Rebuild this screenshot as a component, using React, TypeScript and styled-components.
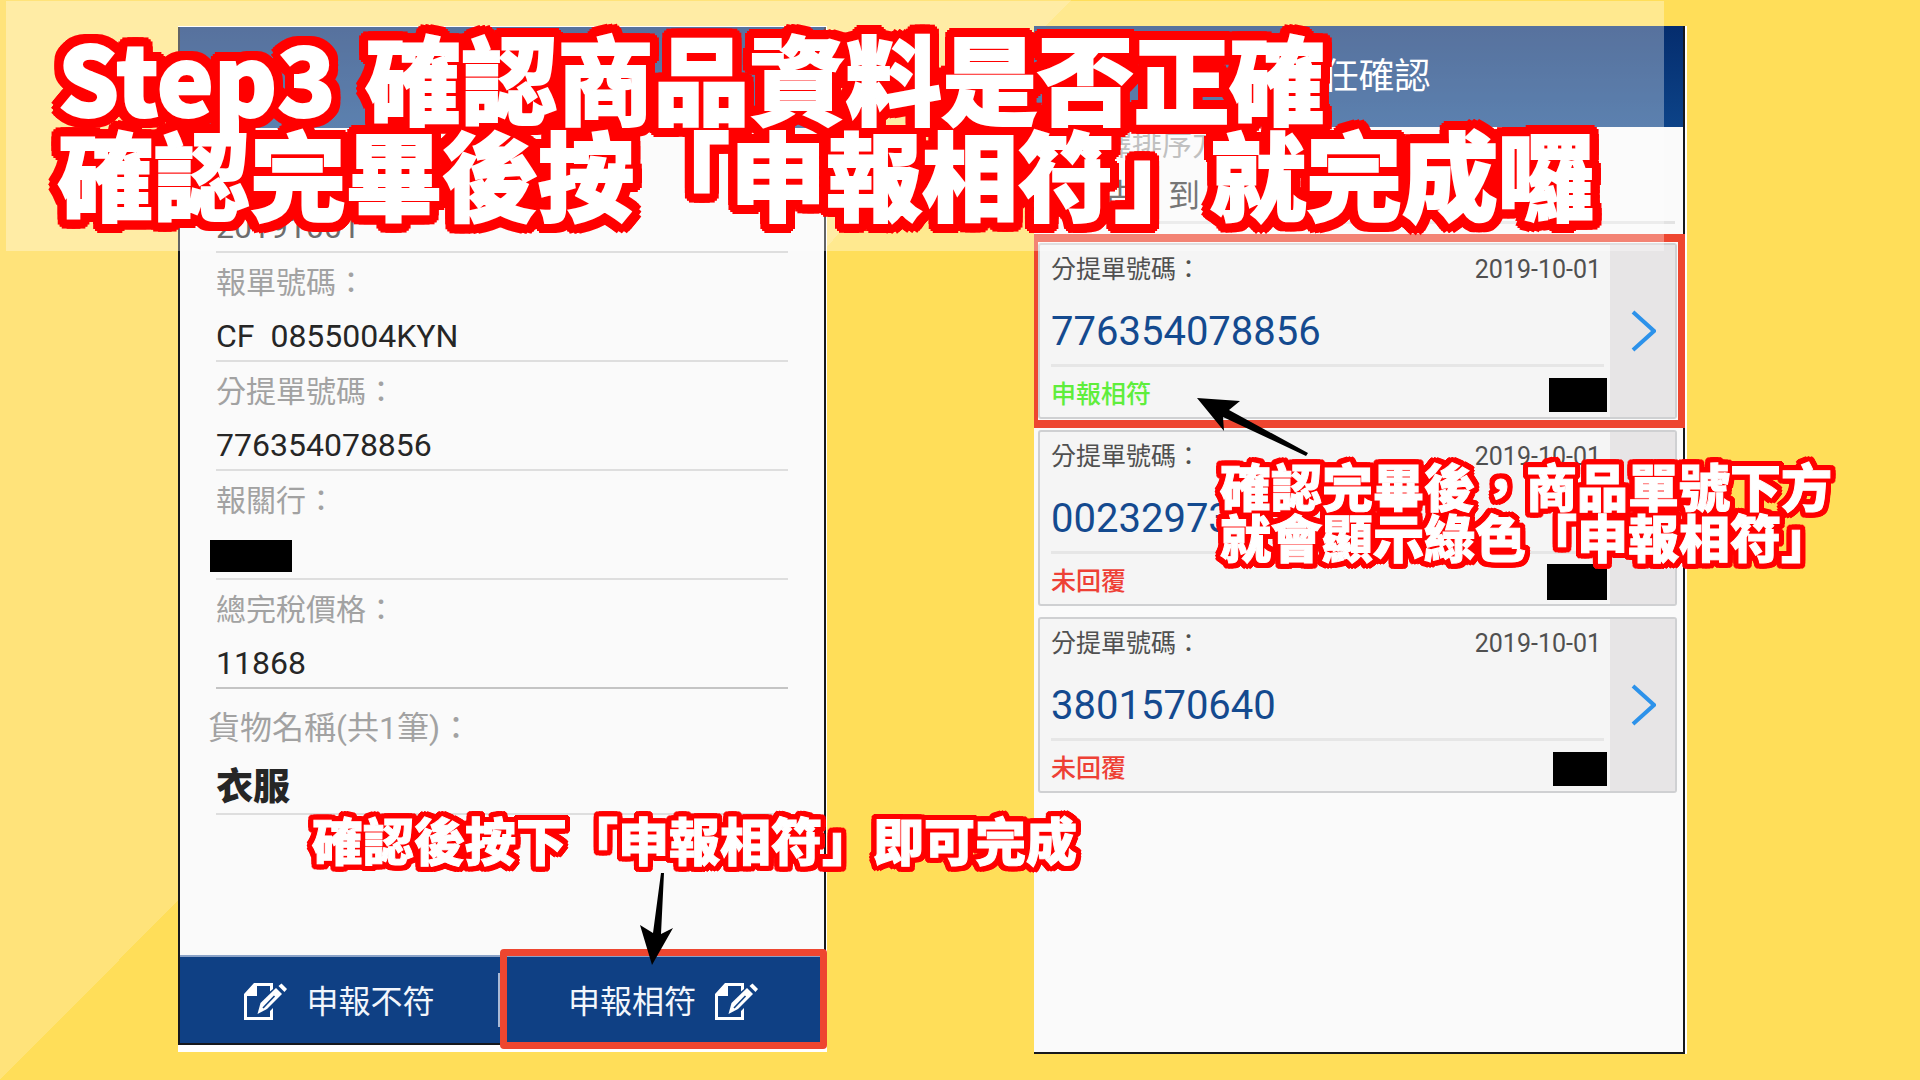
import React from "react";
import styled, { createGlobalStyle, css } from "styled-components";

const cjk = `"Noto Sans CJK TC", "Noto Sans TC", sans-serif`;

/* Chained hard shadows grow one solid outline that stays behind every line of the text. */
const outline = (straight: number, diagonal: number) =>
  [
    [straight, 0],
    [-straight, 0],
    [0, straight],
    [0, -straight],
    [diagonal, diagonal],
    [-diagonal, -diagonal],
    [diagonal, -diagonal],
    [-diagonal, diagonal],
  ]
    .map(([x, y]) => `drop-shadow(${x}px ${y}px 0 #f00)`)
    .join(" ");

const GlobalStyle = createGlobalStyle`
  *, *::before, *::after { box-sizing: border-box; }
  body { margin: 0; background: #ffde59; }
`;

const Stage = styled.main`
  position: relative;
  display: grid;
  grid-template-columns: 178fr 649fr 207fr 653fr 233fr;
  min-height: 100vh;
  padding: 26px 0;
  overflow: hidden;
  font-family: Roboto, ${cjk};
  background: linear-gradient(to bottom right, #ffe37a 50%, #ffde59 50%) 0 0 / 1071px 1080px no-repeat #ffde59;
`;

const Phone = styled.section<{ $side: "left" | "right" }>`
  display: flex;
  min-width: 0;
  background: #fff;
  ${(p) =>
    p.$side === "left"
      ? css`
          grid-column: 2;
          margin-bottom: 2px;
          padding: 1px 1px 7px 0;
        `
      : css`
          grid-column: 4;
          padding-right: 2px;
        `}
`;

const Screen = styled.div<{ $side: "left" | "right" }>`
  display: flex;
  flex: 1;
  flex-direction: column;
  min-width: 0;
  background: #fafafa;
  border: solid #16181c;
  border-width: ${(p) => (p.$side === "left" ? "0 2px 2px 2px" : "0 2px 2px 0")};
`;

const AppBar = styled.header`
  display: flex;
  align-items: center;
  justify-content: center;
  height: 101px;
  color: #fff;
  background: linear-gradient(#052d6e, #0c4388);
`;

const AppTitle = styled.h2`
  margin: 0;
  font-size: 36px;
  font-weight: 400;
  line-height: 48px;
`;

const Fields = styled.dl`
  flex: 1;
  margin: 0;
  padding: 16px 36px 0;
`;

const Field = styled.div<{ $goods?: boolean; $dark?: boolean }>`
  padding-top: ${(p) => (p.$goods ? 18 : 10)}px;
  border-bottom: 2px solid ${(p) => (p.$dark ? "#c4c4c4" : "#dedede")};
`;

const FieldLabel = styled.dt<{ $goods?: boolean }>`
  min-height: 40px;
  margin: ${(p) => (p.$goods ? "0 0 14px -8px" : "0 0 12px")};
  color: #a2a2a2;
  font-size: ${(p) => (p.$goods ? 32 : 30)}px;
  line-height: ${(p) => (p.$goods ? 42 : 40)}px;
`;

const FieldValue = styled.dd<{ $goods?: boolean }>`
  display: flex;
  align-items: center;
  height: ${(p) => (p.$goods ? 50 : 45)}px;
  margin: 0;
  padding-bottom: ${(p) => (p.$goods ? 8 : 4)}px;
  color: #262626;
  font-size: ${(p) => (p.$goods ? 37 : 32)}px;
  font-weight: ${(p) => (p.$goods ? 900 : 400)};
  white-space: pre;
`;

const Redaction = styled.span<{ $w: number; $h: number }>`
  width: ${(p) => p.$w}px;
  height: ${(p) => p.$h}px;
  background: #000;

  ${FieldValue} & {
    margin: 4px 0 0 -6px;
  }
`;

const Actions = styled.footer`
  display: grid;
  grid-template-columns: 1fr 1fr;
  height: 88px;
  border-top: 2px solid #8ba3c8;
  background: #0f4084;
`;

const ActionButton = styled.button<{ $marked?: boolean }>`
  position: relative;
  display: flex;
  align-items: center;
  justify-content: center;
  gap: 19px;
  padding: ${(p) => (p.$marked ? "3px 0 0" : "3px 3px 0 0")};
  border: 0;
  color: #f2f6fc;
  background: none;
  font: 400 32px/44px Roboto, ${cjk};

  &::after {
    content: "";
    position: absolute;
    ${(p) =>
      p.$marked
        ? css`
            inset: -8px -3px -6px -2px;
            border: 7px solid #ee4630;
            border-radius: 4px;
          `
        : css`
            top: 16px;
            right: 2px;
            width: 2px;
            height: 54px;
            background: #a9bad6;
          `}
  }
`;

const EditIcon = () => (
  <svg width="43" height="37" viewBox="0 0 43 37" aria-hidden="true">
    <path
      d="M0 11 L10 0 H29 V6 L26 8.500 V3 H13 V13 H3 V34 H26 V28 L29 25 V37 H0 Z"
      fill="#fff"
    />
    <path d="M13.500 31 L16.500 20 L32 5 L38 11 L23 26 Z" fill="#fff" />
    <path d="M19 25 L30.500 13" stroke="#0f4084" strokeWidth="1.600" />
    <path d="M34.500 3 L37.500 0.500 L43 6 L40.500 9 Z" fill="#fff" />
  </svg>
);

const SortBox = styled.div`
  display: flex;
  flex-direction: column;
  margin: 0 8px 0 38px;
  border-bottom: 3px solid #e3e3e3;
`;

const SortLabel = styled.label`
  margin-bottom: 12px;
  color: #a2a2a2;
  font-size: 30px;
  line-height: 36px;
`;

const SortSelect = styled.select`
  height: 46px;
  padding: 0 0 4px;
  border: 0;
  appearance: none;
  color: #333;
  background: none;
  font: 400 32px/42px Roboto, ${cjk};
`;

const CardList = styled.ul`
  display: flex;
  flex-direction: column;
  gap: 11px;
  margin: 0;
  padding: 19px 6px 0 4px;
  list-style: none;
`;

const Card = styled.li<{ $marked?: boolean }>`
  position: relative;
  display: flex;
  height: 176px;
  border: 2px solid #cfd0d2;
  border-radius: 3px;
  background: #f5f5f5;

  ${(p) =>
    p.$marked &&
    css`
      &::after {
        content: "";
        position: absolute;
        inset: -11px -10px -11px -6px;
        border: solid #ee4630;
        border-width: 8px 7px 8px 4px;
      }
    `}
`;

const CardBody = styled.div`
  flex: 1;
  min-width: 0;
  padding: 7px 3px 0 11px;
`;

const CardHead = styled.div`
  display: flex;
  justify-content: space-between;
  padding-right: 6px;
  color: #505050;
  font-size: 25px;
  line-height: 36px;
`;

const BillNumber = styled.div`
  margin: 20px 3px 0 0;
  padding-bottom: 8px;
  border-bottom: 3px solid #e6e6e6;
  color: #144a8f;
  font-size: 40px;
  line-height: 48px;
`;

const CardFoot = styled.div`
  display: flex;
  align-items: center;
  justify-content: space-between;
  height: 55px;
`;

const Status = styled.span<{ $ok?: boolean }>`
  color: ${(p) => (p.$ok ? "#5fee3c" : "#ee4035")};
  font-size: 25px;
  font-weight: 500;
  line-height: 36px;
`;

const OpenButton = styled.button`
  display: flex;
  align-items: center;
  justify-content: center;
  width: 65px;
  padding: 0;
  border: 0;
  background: #e7e5e6;
`;

const Chevron = () => (
  <svg width="26" height="42" viewBox="0 0 26 42" aria-hidden="true">
    <path d="M3 2 L24 21 L3 40" fill="none" stroke="#2d92ea" strokeWidth="4" />
  </svg>
);

const Haze = styled.div`
  position: absolute;
  top: 1px;
  left: 6px;
  width: 1658px;
  height: 250px;
  background: rgba(255, 255, 255, 0.33);
`;

const Callout = styled.p<{ $x: number; $y: number }>`
  position: absolute;
  top: ${(p) => p.$y}px;
  left: ${(p) => p.$x}px;
  margin: 0;
  color: #fff;
  font: 900 51px/51px ${cjk};
  filter: ${outline(3, 1)};
  -webkit-text-stroke: 1px #fff;
  white-space: nowrap;
`;

const Headline = styled.h1`
  position: absolute;
  top: 28px;
  left: 58px;
  margin: 0;
  color: #fff;
  font: 900 96px/96px ${cjk};
  filter: ${outline(5, 2)};
  -webkit-text-stroke: 2px #fff;
  white-space: nowrap;
`;

const Step = styled.span`
  margin-right: 8px;
`;

const Arrows = styled.svg`
  position: absolute;
  top: 0;
  left: 0;
  pointer-events: none;
`;

const fields = [
  { id: "date", label: "", value: "20191001" },
  { id: "declaration", label: "報單號碼：", value: "CF  0855004KYN" },
  { id: "bill", label: "分提單號碼：", value: "776354078856" },
  { id: "broker", label: "報關行：", value: null },
  { id: "price", label: "總完稅價格：", value: "11868", dark: true },
];

const bills = [
  { no: "776354078856", status: "申報相符", ok: true, w: 58, h: 34 },
  { no: "002329737", status: "未回覆", ok: false, w: 60, h: 36 },
  { no: "3801570640", status: "未回覆", ok: false, w: 54, h: 34 },
];

export default function App() {
  return (
    <>
      <GlobalStyle />
      <Stage>
        <Phone $side="left">
          <Screen $side="left">
            <AppBar />
            <Fields>
              {fields.map((f) => (
                <Field key={f.id} $dark={f.dark}>
                  <FieldLabel>{f.label}</FieldLabel>
                  <FieldValue>{f.value ?? <Redaction $w={82} $h={32} />}</FieldValue>
                </Field>
              ))}
              <Field $goods>
                <FieldLabel $goods>貨物名稱(共1筆)：</FieldLabel>
                <FieldValue $goods>衣服</FieldValue>
              </Field>
            </Fields>
            <Actions>
              <ActionButton type="button">
                <EditIcon />
                申報不符
              </ActionButton>
              <ActionButton type="button" $marked>
                申報相符
                <EditIcon />
              </ActionButton>
            </Actions>
          </Screen>
        </Phone>

        <Phone $side="right">
          <Screen $side="right">
            <AppBar>
              <AppTitle>委任確認</AppTitle>
            </AppBar>
            <SortBox>
              <SortLabel htmlFor="sort">選擇排序方</SortLabel>
              <SortSelect id="sort">
                <option>由古　到</option>
              </SortSelect>
            </SortBox>
            <CardList>
              {bills.map((b) => (
                <Card key={b.no} $marked={b.ok}>
                  <CardBody>
                    <CardHead>
                      <span>分提單號碼：</span>
                      <time dateTime="2019-10-01">2019-10-01</time>
                    </CardHead>
                    <BillNumber>{b.no}</BillNumber>
                    <CardFoot>
                      <Status $ok={b.ok}>{b.status}</Status>
                      <Redaction $w={b.w} $h={b.h} />
                    </CardFoot>
                  </CardBody>
                  <OpenButton type="button" aria-label={b.no}>
                    <Chevron />
                  </OpenButton>
                </Card>
              ))}
            </CardList>
          </Screen>
        </Phone>

        <Haze />
        <Arrows width="1400" height="980" viewBox="0 0 1400 980" aria-hidden="true">
          <path d="M661 873 H664 L661 934 L673 928 L652 965 L640 925 L653 933 Z" />
          <path d="M1197 398 L1240 401 L1229 410 L1308 453 L1306 456 L1223 417 L1224 431 Z" />
        </Arrows>
        <Headline>
          <Step>Step3</Step> 確認商品資料是否正確
          <br />
          確認完畢後按「申報相符」就完成囉
        </Headline>
        <Callout $x={312} $y={814}>
          確認後按下「申報相符」即可完成
        </Callout>
        <Callout $x={1220} $y={460}>
          確認完畢後，商品單號下方
          <br />
          就會顯示綠色「申報相符」
        </Callout>
      </Stage>
    </>
  );
}
